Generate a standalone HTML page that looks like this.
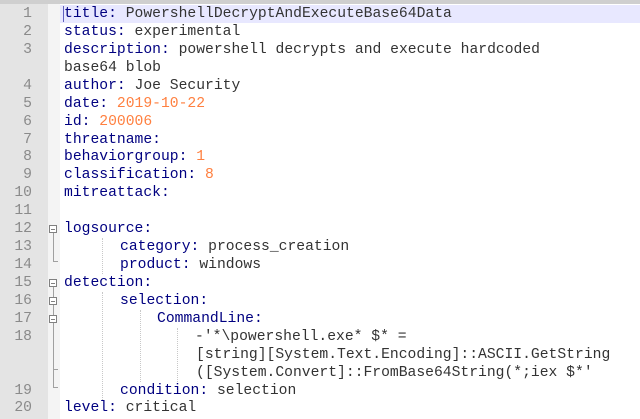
<!DOCTYPE html>
<html><head><style>
body{margin:0;width:640px;height:419px;overflow:hidden;background:#fff;position:relative;font-family:"Liberation Mono",monospace;font-size:14.7px}
.g{position:absolute;left:0;top:0;width:48px;height:419px;background:#e4e4e4}
.f{position:absolute;left:48px;top:0;width:12px;height:419px;background:#f4f4f4}
.tb{position:absolute;left:0;top:0;width:640px;height:4px;background:#cfcfcf}
.hl{position:absolute;left:60px;top:5px;width:580px;height:18px;background:#e8e8ff}
.r{position:absolute;height:18px;line-height:18px;white-space:pre;color:#333}
.n{position:absolute;width:32px;text-align:right;color:#8a8a8a;height:18px;line-height:18px;left:0}
.k{color:#000080}
.o{color:#ff8040}
.bx{position:absolute;left:49px;width:8px;height:8px;border:1px solid #808080;background:#fff;box-sizing:border-box}
.bx:after{content:"";position:absolute;left:1px;top:3px;width:4px;height:1px;background:#808080}
.vl{position:absolute;left:53px;width:1px;background:#a0a0a0}
.dl{position:absolute;width:0;border-left:1px dotted #c8c8c8}
</style></head><body>
<div class="g"></div><div class="f"></div><div class="tb"></div><div class="hl"></div>
<div style="position:absolute;left:63px;top:6px;width:1px;height:16px;background:#6060c0"></div>

<div class="n" style="top:5px">1</div><div class="r" style="left:64px;top:5px"><span class="k">title:</span> PowershellDecryptAndExecuteBase64Data</div>
<div class="n" style="top:23px">2</div><div class="r" style="left:64px;top:23px"><span class="k">status:</span> experimental</div>
<div class="n" style="top:41px">3</div><div class="r" style="left:64px;top:41px"><span class="k">description:</span> powershell decrypts and execute hardcoded</div>
<div class="r" style="left:64px;top:59px">base64 blob</div>
<div class="n" style="top:77px">4</div><div class="r" style="left:64px;top:77px"><span class="k">author:</span> Joe Security</div>
<div class="n" style="top:95px">5</div><div class="r" style="left:64px;top:95px"><span class="k">date:</span> <span class="o">2019-10-22</span></div>
<div class="n" style="top:113px">6</div><div class="r" style="left:64px;top:113px"><span class="k">id:</span> <span class="o">200006</span></div>
<div class="n" style="top:131px">7</div><div class="r" style="left:64px;top:131px"><span class="k">threatname:</span></div>
<div class="n" style="top:148px">8</div><div class="r" style="left:64px;top:148px"><span class="k">behaviorgroup:</span> <span class="o">1</span></div>
<div class="n" style="top:166px">9</div><div class="r" style="left:64px;top:166px"><span class="k">classification:</span> <span class="o">8</span></div>
<div class="n" style="top:184px">10</div><div class="r" style="left:64px;top:184px"><span class="k">mitreattack:</span></div>
<div class="n" style="top:202px">11</div>
<div class="n" style="top:220px">12</div><div class="r" style="left:64px;top:220px"><span class="k">logsource:</span></div>
<div class="n" style="top:238px">13</div><div class="r" style="left:120px;top:238px"><span class="k">category:</span> process_creation</div>
<div class="n" style="top:256px">14</div><div class="r" style="left:120px;top:256px"><span class="k">product:</span> windows</div>
<div class="n" style="top:274px">15</div><div class="r" style="left:64px;top:274px"><span class="k">detection:</span></div>
<div class="n" style="top:292px">16</div><div class="r" style="left:120px;top:292px"><span class="k">selection:</span></div>
<div class="n" style="top:310px">17</div><div class="r" style="left:157px;top:310px"><span class="k">CommandLine:</span></div>
<div class="n" style="top:328px">18</div><div class="r" style="left:195px;top:328px">-'*\powershell.exe* $* =</div>
<div class="r" style="left:196px;top:346px">[string][System.Text.Encoding]::ASCII.GetString</div>
<div class="r" style="left:196px;top:364px">([System.Convert]::FromBase64String(*;iex $*'</div>
<div class="n" style="top:382px">19</div><div class="r" style="left:120px;top:382px"><span class="k">condition:</span> selection</div>
<div class="n" style="top:399px">20</div><div class="r" style="left:64px;top:399px"><span class="k">level:</span> critical</div>

<div class="bx" style="top:225px"></div>
<div class="vl" style="top:233px;height:29px"></div><div style="position:absolute;left:53px;top:261px;width:5px;height:1px;background:#a0a0a0"></div>
<div class="bx" style="top:279px"></div>
<div class="vl" style="top:287px;height:100px"></div><div style="position:absolute;left:53px;top:387px;width:5px;height:1px;background:#a0a0a0"></div>
<div class="bx" style="top:297px"></div>
<div class="bx" style="top:315px"></div>
<div style="position:absolute;left:53px;top:369px;width:5px;height:1px;background:#a0a0a0"></div>
<div class="dl" style="left:102px;top:238px;height:36px"></div>
<div class="dl" style="left:102px;top:292px;height:108px"></div>
<div class="dl" style="left:140px;top:310px;height:72px"></div>
<div class="dl" style="left:177px;top:328px;height:54px"></div>
</body></html>
